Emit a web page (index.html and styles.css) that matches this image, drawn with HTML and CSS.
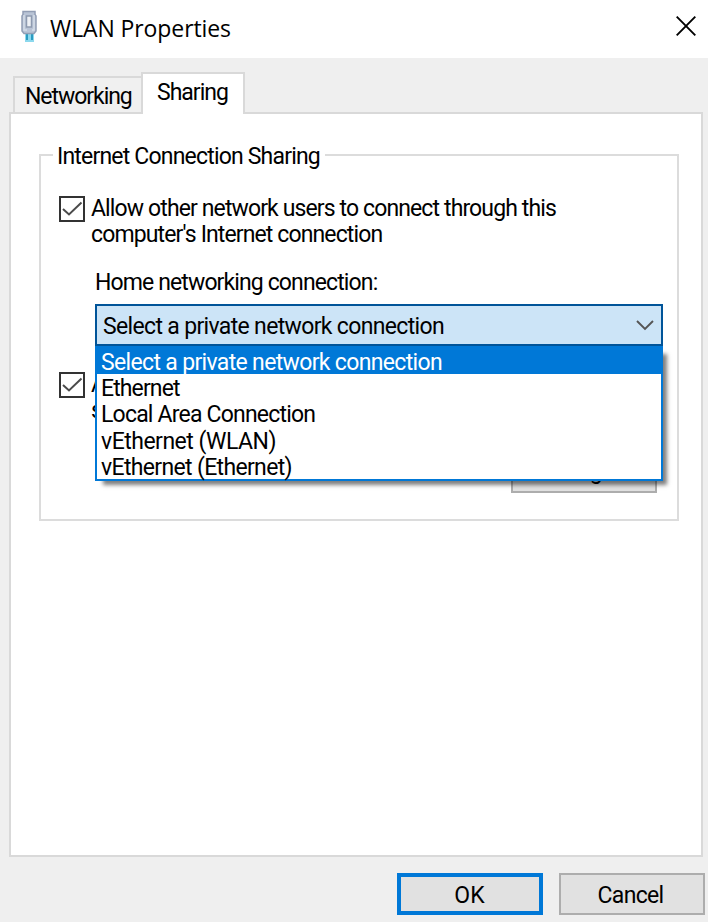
FILE: index.html
```html
<!DOCTYPE html>
<html lang="en">
<head>
<meta charset="utf-8">
<title>WLAN Properties</title>
<link rel="stylesheet" href="styles.css">
</head>
<body>
<main class="dialog">
  <header class="titlebar">
    <svg class="plug" width="20" height="34" viewBox="0 0 20 34">
      <path d="M6 23h9v9H6z" fill="#8bd8ed"/>
      <path d="M7 23h2v7H7zM12 23h2v7h-2z" fill="#2c9bc1"/>
      <path d="M4 1.500h12v3l1 1.500v15L15 23.500H5L3 21V6L4 4.500z" fill="#b9c4d6" stroke="#929eb5" stroke-width="1.500"/>
      <path d="M5 5v15h3M15 5v15h-2" fill="none" stroke="#d3dbe7" stroke-width="1.500"/>
      <path d="M7.500 6h5v11h-5z" fill="#edf0f5" stroke="#8e9ab0" stroke-width="1.500"/>
    </svg>
    <h1 class="title">WLAN Properties</h1>
    <svg class="close" width="20" height="20" viewBox="0 0 20 20"><path d="M.7.700l18.600 18.600M19.300.700L.7 19.300" fill="none" stroke="#000" stroke-width="1.900"/></svg>
  </header>
  <nav class="tabs">
    <div class="tab networking"><span>Networking</span></div>
    <div class="tab active"><span>Sharing</span></div>
  </nav>
  <section class="panel">
    <div class="group">
      <h2 class="legend"><span>Internet Connection Sharing</span></h2>
      <div class="option">
        <svg class="check" width="26" height="26" viewBox="0 0 26 26"><path d="M1 1h24v24H1z" fill="#fff" stroke="#333" stroke-width="2"/><path d="M4 13l6 5.500L22.500 6.500" fill="none" stroke="#4b4b4b" stroke-width="2"/></svg>
        <div class="copy"><div class="allow">Allow other network users to connect through this</div><div class="computer">computer's Internet connection</div></div>
      </div>
      <div class="label">Home networking connection:</div>
      <div class="combo">
        <span class="value">Select a private network connection</span>
        <svg width="18" height="11" viewBox="0 0 18 11"><path d="M1 1l8 8 8-8" fill="none" stroke="#555" stroke-width="1.900"/></svg>
        <ul class="menu">
          <li class="selected">Select a private network connection</li>
          <li class="ethernet">Ethernet</li>
          <li class="local">Local Area Connection</li>
          <li class="vwlan">vEthernet (WLAN)</li>
          <li class="vethernet">vEthernet (Ethernet)</li>
        </ul>
      </div>
      <div class="option second">
        <svg class="check" width="26" height="26" viewBox="0 0 26 26"><path d="M1 1h24v24H1z" fill="#fff" stroke="#333" stroke-width="2"/><path d="M4 13l6 5.500L22.500 6.500" fill="none" stroke="#4b4b4b" stroke-width="2"/></svg>
        <div class="copy"><div>A</div><div>s</div></div>
      </div>
      <div class="button settings">Settings...</div>
    </div>
  </section>
  <footer class="actions">
    <div class="button ok"><span>OK</span></div>
    <div class="button cancel"><span>Cancel</span></div>
  </footer>
</main>
</body>
</html>
```
FILE: styles.css
```css
* { box-sizing: border-box; }
body { margin: 0; }
.dialog { width: 708px; height: 922px; overflow: hidden; background: #efefef; color: #000; font: 23px/26px "Roboto", "Liberation Sans", sans-serif; letter-spacing: -.88px; white-space: nowrap; }
.titlebar { height: 58px; background: #fff; display: flex; align-items: flex-start; padding-left: 19px; padding-right: 12px; }
.plug { margin-top: 10px; }
.title { margin: 12px 0 0 11px; font: 400 23px/32px "Open Sans", "Noto Sans", sans-serif; letter-spacing: -.1px; }
.close { margin: 16px 0 0 auto; }
.tabs { display: flex; align-items: flex-end; height: 54px; padding-left: 13px; }
.tab { width: 128px; height: 36px; border: 2px solid #d9d9d9; border-right: 0; border-bottom: 0; padding: 6px 0 0 10px; background: #f0f0f0; }
.networking { letter-spacing: -1.050px; }
.tab.active { width: 104px; height: 42px; background: #fff; border-right: 2px solid #d9d9d9; margin-bottom: -2px; padding: 6px 0 0 14px; z-index: 1; letter-spacing: -1px; }
.panel { margin-left: 9px; width: 694px; height: 745px; background: #fff; border: 2px solid #d9d9d9; padding: 40px 22px 0 28px; }
.group { width: 640px; height: 367px; border: 2px solid #dcdcdc; padding-left: 18px; }
.legend { margin: -12px 0 0 -6px; width: 272px; padding-left: 4px; background: #fff; font: inherit; letter-spacing: -.81px; }
.option { display: flex; height: 52px; margin-top: 26px; gap: 6px; }
.label { margin: 22px 0 0 36px; }
.combo { position: relative; margin: 8px 0 0 36px; width: 568px; height: 42px; border: 2px solid #005499; background: #cce4f7; display: flex; justify-content: space-between; align-items: center; padding: 1px 7px 0 6px; letter-spacing: -.66px; }
.value { padding-top: 2px; }
.menu { position: absolute; z-index: 2; top: 40px; left: -2px; width: 568px; height: 135px; margin: 0; padding: 0; list-style: none; background: #fff; border: 2px solid #0078d7; line-height: 30px; box-shadow: 6px 6px 4px -2px rgba(0,0,0,.5); }
.menu li { height: 26.250px; padding-left: 4px; }
.menu .selected { height: 26px; background: #0078d7; color: #fff; }
.ethernet { letter-spacing: -.88px; }
.local { letter-spacing: -.8px; }
.vwlan { letter-spacing: -.5px; }
.second { margin-top: 26px; }
.button { width: 146px; height: 42px; display: flex; align-items: center; justify-content: center; padding-top: 3px; background: #e1e1e1; border: 2px solid #adadad; }
.settings { margin: 27px 0 0 452px; padding: 0 4px 0 0; }
.actions { display: flex; justify-content: flex-end; gap: 16px; padding: 16px 3px 0 0; }
.ok { border: 4px solid #0078d7; letter-spacing: 0; padding-right: 1px; }
.cancel { letter-spacing: -.7px; padding-right: 3px; }
```
